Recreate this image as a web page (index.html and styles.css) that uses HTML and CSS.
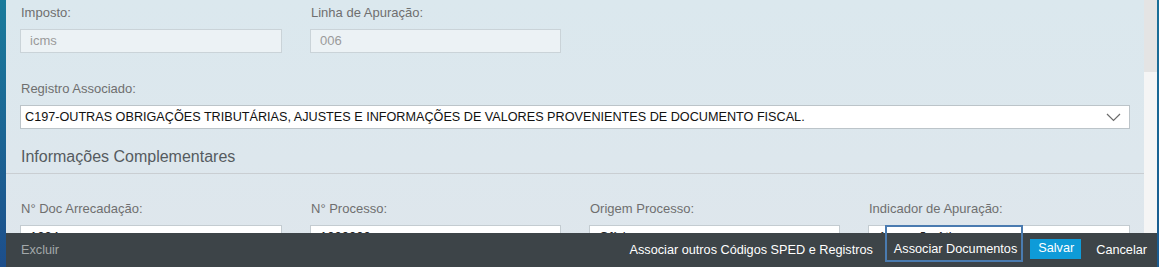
FILE: index.html
```html
<!DOCTYPE html>
<html lang="pt">
<head>
<meta charset="utf-8">
<link rel="stylesheet" href="styles.css">
</head>
<body>
<div class="frame">
  <div class="edge-left"></div>
  <div class="main">
    <div class="content">
      <div class="row">
        <div class="field w-wide">
          <label class="lbl">Imposto:</label>
          <div class="input ro">icms</div>
        </div>
        <div class="field w-narrow">
          <label class="lbl">Linha de Apuração:</label>
          <div class="input ro">006</div>
        </div>
      </div>
      <div class="row row-reg">
        <div class="field w-full">
          <label class="lbl">Registro Associado:</label>
          <div class="input select">
            <span>C197-OUTRAS OBRIGAÇÕES TRIBUTÁRIAS, AJUSTES E INFORMAÇÕES DE VALORES PROVENIENTES DE DOCUMENTO FISCAL.</span>
            <svg class="chev" width="15" height="9" viewBox="0 0 15 9"><polyline points="1,1 7.5,7.5 14,1" fill="none" stroke="#6b6b6b" stroke-width="1.2"/></svg>
          </div>
        </div>
      </div>
    </div>
    <div class="section">
      <h2 class="sec-title">Informações Complementares</h2>
    </div>
    <div class="content lower">
      <div class="row">
        <div class="field w-wide">
          <label class="lbl">N° Doc Arrecadação:</label>
          <div class="input">1234</div>
        </div>
        <div class="field w-narrow">
          <label class="lbl">N° Processo:</label>
          <div class="input">1000000</div>
        </div>
        <div class="field w-narrow">
          <label class="lbl">Origem Processo:</label>
          <div class="input">Ofício</div>
        </div>
        <div class="field w-wide">
          <label class="lbl">Indicador de Apuração:</label>
          <div class="input">Apuração Ativa</div>
        </div>
      </div>
    </div>
  </div>
  <div class="scrollbar"><div class="thumb"></div></div>
  <div class="edge-right"></div>

  <div class="footer">
    <button class="fbtn muted">Excluir</button>
    <div class="actions">
      <button class="fbtn">Associar outros Códigos SPED e Registros</button>
      <button class="fbtn focused">Associar Documentos</button>
      <button class="fbtn primary">Salvar</button>
      <button class="fbtn cancel">Cancelar</button>
    </div>
  </div>
</div>
</body>
</html>
```
FILE: styles.css
```css
* { box-sizing: border-box; }
html, body {
  margin: 0;
  padding: 0;
  width: 1159px;
  height: 267px;
  overflow: hidden;
  font-family: "Liberation Sans", Arial, sans-serif;
}
.frame {
  position: relative;
  display: flex;
  width: 1159px;
  height: 267px;
}
.edge-left {
  width: 6px;
  flex: none;
  background: linear-gradient(180deg, #1a7b9b 0%, #1b6594 50%, #1d4e8b 100%);
}
.edge-right {
  width: 2px;
  flex: none;
  background: linear-gradient(180deg, #1a6f98 0%, #1b5b90 100%);
}
.main {
  flex: 1;
  background: linear-gradient(180deg, #dbe8ee 0%, #dde7ed 60%, #dfe6ec 100%);
  overflow: hidden;
}
.scrollbar {
  width: 13px;
  flex: none;
  background: #f5f5f5;
}
.thumb {
  height: 72px;
  background: #e4e4e4;
}
.content {
  padding: 5px 0 0 14px;
}
.row {
  display: flex;
  gap: 28px;
}
.row-reg {
  margin-top: 28px;
}
.field {
  display: flex;
  flex-direction: column;
}
.w-wide { width: 262px; }
.w-narrow { width: 251px; }
.w-full { width: 1110px; }
.lbl {
  font-size: 13px;
  line-height: 15px;
  color: #6f6f6f;
  margin-bottom: 9px;
  padding-left: 1px;
}
.input {
  height: 24px;
  border: 1px solid #c4ccd1;
  background: #ffffff;
  font-size: 13px;
  line-height: 22px;
  padding: 0 9px;
  color: #222;
  white-space: nowrap;
  overflow: hidden;
}
.input.ro {
  background: #ecf2f5;
  border-color: #cad3d8;
  color: #9a9a9a;
}
.input.select {
  display: flex;
  align-items: center;
  justify-content: space-between;
  padding: 0 8px 0 4px;
  font-size: 12.65px;
  color: #111;
  border-color: #bcc4c9;
}
.chev { flex: none; }
.section {
  margin-top: 19px;
  border-bottom: 1px solid #c9ced2;
  padding: 0 0 7px 14px;
}
.sec-title {
  margin: 0;
  font-weight: normal;
  font-size: 16px;
  line-height: 18px;
  color: #555b5f;
  padding-left: 1px;
}
.lower {
  padding-top: 27px;
}
.footer {
  position: absolute;
  left: 6px;
  right: 2px;
  bottom: 0;
  height: 34px;
  background: #3d4448;
  display: flex;
  align-items: center;
  justify-content: space-between;
  padding: 0 2px 0 15px;
}
.actions {
  display: flex;
  align-items: center;
}
.fbtn {
  font-family: "Liberation Sans", Arial, sans-serif;
  font-size: 12.7px;
  line-height: 15px;
  color: #ffffff;
  background: transparent;
  border: 0;
  padding: 0 8px;
  cursor: pointer;
}
.fbtn.muted {
  color: #a3a8aa;
  padding: 0;
}
.footer .actions .fbtn.focused {
  border: 2px solid #4a7bb0;
  height: 37px;
  margin: -13px 7px 0 4px;
  padding: 12px 4px 0 7px;
}
.fbtn.primary {
  background: #0e9bd8;
  height: 20px;
  padding: 0 7px 0 8px;
  margin-bottom: 3px;
}
.fbtn.cancel {
  margin-left: 7px;
}
```
